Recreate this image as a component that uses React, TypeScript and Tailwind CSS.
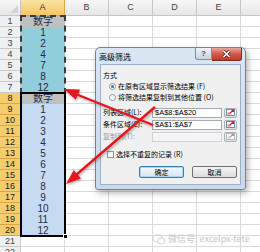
import React from 'react';

type Kind = 'title' | 'teal' | 'blue' | 'empty';

// column A contents, rows 1..22
const sheetRows: { kind: Kind; v: string }[] = [
  { kind: 'title', v: '数字' },
  ...['1', '2', '4', '7', '8', '12'].map((v) => ({ kind: 'teal' as Kind, v })),
  { kind: 'title', v: '数字' },
  ...Array.from({ length: 12 }, (_, i) => ({ kind: 'blue' as Kind, v: String(i + 1) })),
  { kind: 'empty', v: '' },
  { kind: 'empty', v: '' },
];

const cellA: Record<Kind, string> = {
  title: 'bg-[#c0c0c0]',
  teal: 'bg-[#92cddc]',
  blue: 'bg-[#c6daf1]',
  empty: 'bg-white border-r border-b border-[#dadada]',
};

// F is only a sliver at the right edge, its letter falls outside the window
const otherCols = ['B', 'C', 'D', 'E', ''];

function RefButton({ disabled }: { disabled?: boolean }) {
  return (
    <div className="w-[13px] h-[10px] rounded-[2px] border border-[#a9b3bf] bg-gradient-to-b from-[#fbfbfb] to-[#dedfe2] flex items-center justify-center">
      <svg width="9" height="7" viewBox="0 0 9 7">
        <rect x="0.5" y="0.5" width="8" height="6" fill="#fff" stroke={disabled ? '#b8b8b8' : '#7a8aa0'} />
        <rect x="1.5" y="3.5" width="3" height="2" fill={disabled ? '#d8c8c8' : '#e0707a'} />
        <path d="M4 4 L7.5 1 M5.5 1 H7.5 V3" stroke={disabled ? '#c09090' : '#c8202a'} strokeWidth="1.1" fill="none" />
      </svg>
    </div>
  );
}

function RangeRow({ label, value, disabled }: { label: string; value: string; disabled?: boolean }) {
  return (
    <div className="h-[11px] flex items-center">
      <span className={`w-[49px] ${disabled ? 'text-[#9a9a9a]' : 'text-black'}`}>{label}</span>
      <div
        className={`w-[70px] h-[10px] border flex items-center pl-[2px] text-[7.5px] leading-[10px] font-['Liberation_Sans',sans-serif] ${
          disabled ? 'bg-[#f4f4f4] border-[#cfd3d8]' : 'bg-white border-[#a3a9b3]'
        }`}
      >
        {value}
      </div>
      <div className="ml-[2px]">
        <RefButton disabled={disabled} />
      </div>
    </div>
  );
}

function Radio({ checked }: { checked?: boolean }) {
  return (
    <span className="w-[7px] h-[7px] rounded-full border border-[#8a96a6] bg-gradient-to-b from-[#f6f6f6] to-[#ffffff] flex items-center justify-center">
      {checked && <span className="w-[3px] h-[3px] rounded-full bg-[#2f6fc0]" />}
    </span>
  );
}

function Dialog() {
  return (
    <div className="absolute left-[95px] top-[47px] w-[151px] h-[143px] rounded-t-[5px] rounded-b-[3px] border border-[#6f839c] bg-gradient-to-b from-[#dbe6f3] to-[#c9d8eb] shadow-[2px_3px_6px_rgba(0,0,0,0.3)] flex flex-col">
      {/* title bar */}
      <div className="h-[16px] flex items-start">
        <span className="pl-[3px] text-[8px] leading-[17px] text-black">高级筛选</span>
        <div className="ml-auto mr-[3px] flex">
          <div className="w-[17px] h-[12px] rounded-bl-[3px] border border-t-0 border-[#7d8ea5] bg-gradient-to-b from-[#eef3f9] to-[#c7d4e4] flex items-center justify-center text-[8px] leading-none font-bold text-[#4a5566] font-['Liberation_Sans',sans-serif]">
            ?
          </div>
          <div className="w-[30px] h-[13px] rounded-br-[3px] border border-t-0 border-l-0 border-[#7a2b22] bg-gradient-to-b from-[#e9a89c] via-[#d0584a] to-[#c23a2a] flex items-center justify-center">
            <svg width="9" height="8" viewBox="0 0 9 8">
              <path d="M1.5 1 L7.5 7 M7.5 1 L1.5 7" stroke="#5a1a14" strokeWidth="3" />
              <path d="M1.5 1 L7.5 7 M7.5 1 L1.5 7" stroke="#fff" strokeWidth="1.6" />
            </svg>
          </div>
        </div>
      </div>
      {/* body */}
      <div className="mx-[4px] mb-[4px] flex-1 bg-[#f0f0f0] border border-[#9fb0c4] pt-[5px] px-[2px] flex flex-col text-[7px] leading-[11px] text-black">
        <div className="h-[11px]">方式</div>
        <div className="h-[11px] flex items-center pl-[6px] gap-[2px]">
          <Radio checked />
          <span>在原有区域显示筛选结果 (F)</span>
        </div>
        <div className="h-[11px] flex items-center pl-[6px] gap-[2px]">
          <Radio />
          <span>将筛选结果复制到其他位置 (O)</span>
        </div>
        <div className="mt-[4px] flex flex-col gap-[1px]">
          <RangeRow label="列表区域(L):" value="$A$8:$A$20" />
          <RangeRow label="条件区域(C):" value="$A$1:$A$7" />
          <RangeRow label="复制到(T):" value="" disabled />
        </div>
        <div className="mt-[7px] h-[11px] flex items-center pl-[4px] gap-[2px]">
          <span className="w-[7px] h-[7px] border border-[#8a96a6] bg-gradient-to-br from-[#e6e9ee] to-white" />
          <span>选择不重复的记录 (R)</span>
        </div>
        <div className="mt-[6px] flex justify-end gap-[8px] pr-[1px]">
          <div className="w-[45px] h-[12px] rounded-[2px] border border-[#3c7fb1] bg-gradient-to-b from-[#f2f8fd] to-[#d6e6f4] shadow-[inset_0_0_0_1px_#a9d4f3] flex items-center justify-center leading-none">
            确定
          </div>
          <div className="w-[45px] h-[12px] rounded-[2px] border border-[#707070] bg-gradient-to-b from-[#f4f4f4] to-[#dcdcdc] flex items-center justify-center leading-none">
            取消
          </div>
        </div>
      </div>
    </div>
  );
}

function Arrows() {
  return (
    <svg className="absolute left-0 top-0 pointer-events-none" width="260" height="252" viewBox="0 0 260 252">
      <defs>
        <filter id="arrowShadow" x="-20%" y="-20%" width="140%" height="140%">
          <feDropShadow dx="1" dy="1.5" stdDeviation="0.8" floodColor="#000" floodOpacity="0.3" />
        </filter>
      </defs>
      <g filter="url(#arrowShadow)" fill="#e5161d" stroke="#e5161d">
        <line x1="153" y1="125" x2="77" y2="94.5" strokeWidth="2.4" />
        <polygon points="64,89 80,89.6 75.8,99.8" stroke="none" />
        <line x1="155" y1="107" x2="76" y2="175" strokeWidth="2.4" />
        <polygon points="66,184 81,178.4 73.7,170" stroke="none" />
      </g>
    </svg>
  );
}

export default function App() {
  return (
    <div className="relative w-[260px] h-[252px] overflow-hidden bg-white font-['Noto_Sans_CJK_SC',sans-serif]">
      {/* sheet */}
      <div className="grid grid-cols-[21px_44px_44px_44px_44px_44px_44px] grid-rows-[16px_repeat(22,11px)]">
        {/* header row */}
        <div className="border-r border-b border-[#c6c6c6] bg-gradient-to-b from-[#f7f7f7] to-[#e6e6e6] relative">
          <svg className="absolute right-[2px] bottom-[2px]" width="8" height="8" viewBox="0 0 8 8">
            <polygon points="8,0 8,8 0,8" fill="#d4d4d4" />
          </svg>
        </div>
        <div className="border-r border-b border-[#e0a640] bg-gradient-to-b from-[#fbe3a0] to-[#f3c663] flex items-center justify-center text-[9px] text-[#333] font-['Liberation_Sans',sans-serif]">
          A
        </div>
        {otherCols.map((c, ci) => (
          <div
            key={ci}
            className="border-r border-b border-[#c6c6c6] bg-gradient-to-b from-[#f7f7f7] to-[#e6e6e6] flex items-center justify-center text-[9px] text-[#444] font-['Liberation_Sans',sans-serif]"
          >
            {c}
          </div>
        ))}

        {sheetRows.map((r, i) => {
          const n = i + 1;
          const sel = n >= 8 && n <= 20;
          return (
            <React.Fragment key={n}>
              <div
                className={`border-r border-b flex items-center justify-center text-[9px] leading-none font-['Liberation_Sans',sans-serif] ${
                  sel ? 'bg-[#f5cd6c] border-[#dba548] text-[#222]' : 'bg-[#eef0f2] border-[#c9c9c9] text-[#444]'
                }`}
              >
                {n}
              </div>
              <div
                className={`flex items-center justify-center text-[10px] leading-none text-[#1f2c48] font-['Liberation_Sans','Noto_Sans_CJK_SC',sans-serif] ${cellA[r.kind]}`}
              >
                {r.v}
              </div>
              {otherCols.map((c, ci) => (
                <div key={ci} className="border-r border-b border-[#dadada]" />
              ))}
            </React.Fragment>
          );
        })}
      </div>

      {/* copy marquee A1:A7 */}
      <div className="absolute left-[20px] top-[15px] w-[46px] h-[79px] border-2 border-dashed border-[#3a3a3a]" />
      {/* selection A8:A20 */}
      <div className="absolute left-[20px] top-[92px] w-[46px] h-[145px] border-2 border-black" />
      <div className="absolute left-[63px] top-[234px] w-[5px] h-[5px] bg-black border border-white" />

      <Dialog />
      <Arrows />

      {/* watermark */}
      <div className="absolute left-[152px] top-[233px] flex items-center gap-[2px] text-[9px] leading-[12px] text-[#c6c6c6]">
        <svg width="14" height="11" viewBox="0 0 14 11">
          <ellipse cx="5.5" cy="4.5" rx="4.5" ry="3.6" fill="none" stroke="#cfcfcf" strokeWidth="1" />
          <ellipse cx="9.2" cy="7" rx="3.8" ry="3" fill="#fff" stroke="#cfcfcf" strokeWidth="1" />
        </svg>
        <span>微信号: excelpx-tete</span>
      </div>
    </div>
  );
}
